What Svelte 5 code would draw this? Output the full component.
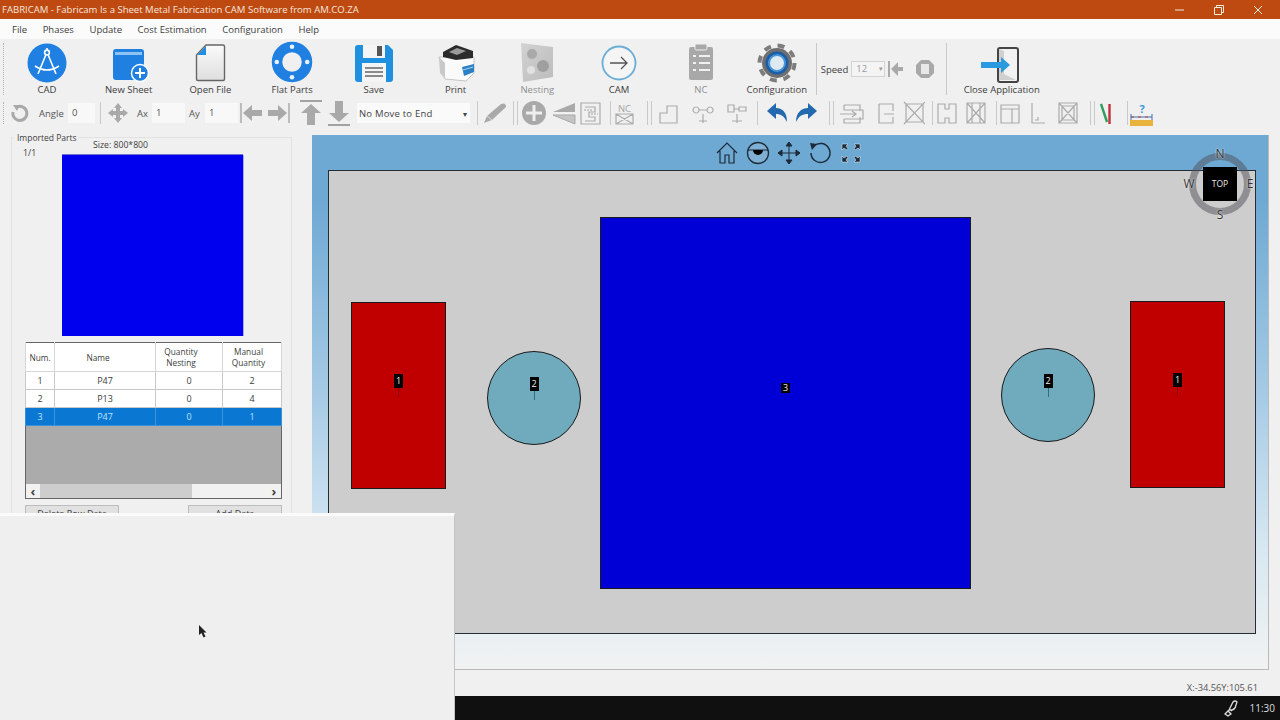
<script lang="ts">
  const g = "#a9a9a9";
  const line = (d: string) => `<path d="${d}" fill="none" stroke="#ababab" stroke-width="1.2"/>`;

  // second toolbar, right of the move-mode select: gap from the previous item, then either a separator or an icon
  const strip = [
    { gap: 7 },
    { gap: 5, w: 24, svg: `<path d="M1 22 L4 15 L18 3 Q23 1 23 6 L9 19 Z" fill="${g}"/><path d="M4 15 L9 19" stroke="#ddd"/>` },
    { gap: 6 },
    { gap: 3 },
    { gap: 4, w: 24, svg: `<circle cx="12" cy="12" r="12" fill="${g}"/><path d="M12 4V20M4 12H20" stroke="#eee" stroke-width="3"/>` },
    { gap: 6, w: 24, svg: `<path d="M1 11 L23 2 V11 Z" fill="${g}"/><path d="M1 14 H23 V23 Z" fill="#c4c4c4" stroke="${g}"/>` },
    { gap: 4, w: 21, svg: line("M1 2H20V23H1ZM5 6H15V11H9V16H15V20H5") + `<path d="M4 9H13M11 13H18" stroke="#a6a6a6" stroke-dasharray="2 1"/>` },
    { gap: 9 },
    { gap: 2, w: 23, svg: `<text x="11.5" y="11" text-anchor="middle" font-size="9.5" fill="#a6a6a6" font-family="Open Sans">NC</text>` + line("M3 13H20V23H3ZM3 13L20 23M20 13L3 23") },
    { gap: 11 },
    { gap: 3 },
    { gap: 7, w: 19, svg: line("M1 22V12H8V5H18V22Z") },
    { gap: 13, w: 23, svg: line("M5 6a3 3 0 1 0 .1 0M19 6a3 3 0 1 0 .1 0M8 9H16M12 13V22M8 20H16") },
    { gap: 12, w: 21, svg: line("M2 4H8V11H2ZM13 6H20V10H13ZM8 8H13M11 13V22M6 20H16") },
    { gap: 10 },
    { gap: 8, w: 21, svg: `<path d="M1 10 L10 2 V7 C17 7 21 12 21 21 C18 15 15 13 10 13 V18 Z" fill="#2269ae"/>` },
    { gap: 8, w: 22, svg: `<path d="M22 10 L13 2 V7 C6 7 1 12 1 21 C4 15 7 13 13 13 V18 Z" fill="#2269ae"/>` },
    { gap: 12 },
    { gap: 3 },
    { gap: 5, w: 26, svg: line("M5 4H21V10M5 4V9M5 18V22H21V16M1 13H17M13 10L17 13L13 16M5 9H24V18H5") },
    { gap: 13, w: 17, svg: line("M1 3H15V10M1 3V22H15V16M6 13H16") },
    { gap: 8, w: 22, svg: line("M3 3H20V21H3ZM1 1L22 23M22 1L1 23") },
    { gap: 7 },
    { gap: 4, w: 20, svg: line("M1 3H8V8H12V3H19V22H12V17H8V22H1Z") },
    { gap: 9, w: 20, svg: line("M1 2H19V22H1ZM1 2L19 22M19 2L1 22M6 2V22M14 2V22") },
    { gap: 10 },
    { gap: 3, w: 20, svg: line("M1 4H19V22H1ZM1 8H19M12 8V22") },
    { gap: 10, w: 16, svg: line("M2 2V22H15M5 19H8V16") },
    { gap: 12, w: 20, svg: line("M1 2H19V22H1ZM1 2L19 22M19 2L1 22M4 5H16V19H4Z") },
    { gap: 12 },
    { gap: 3 },
    { gap: 5, w: 11, svg: `<path d="M1 3L7 21" stroke="#2f9e5a" stroke-width="2.4"/><path d="M9.5 3V23" stroke="#c0303c" stroke-width="2.4"/>` },
    { gap: 16 },
    { gap: 2, w: 23, svg: `<text x="12" y="12" text-anchor="middle" font-size="11" font-weight="700" fill="#3a9ad9" font-family="Open Sans">?</text><path d="M1 13V19M22 13V19M1 16H22" stroke="#3b6fb0"/><path d="M1 16H22" stroke="#c04040" stroke-dasharray="3 4"/><rect x="0" y="19" width="23" height="6" fill="#e8b23c"/>` }
  ];

  const rows = [
    { num: 1, name: "P47", nesting: 0, manual: 2 },
    { num: 2, name: "P13", nesting: 0, manual: 4 },
    { num: 3, name: "P47", nesting: 0, manual: 1, selected: true }
  ];

  const shapes = [
    { kind: "red one", tag: 1 },
    { kind: "disc one", tag: 2 },
    { kind: "blue", tag: 3 },
    { kind: "disc two", tag: 2 },
    { kind: "red two", tag: 1 }
  ];
</script>

<div class="app">
  <header class="title">
    <span>FABRICAM - Fabricam Is a Sheet Metal Fabrication CAM Software from AM.CO.ZA</span>
    <div class="win">
      <svg width="12" height="12" viewBox="0 0 12 12"><path d="M1 6H10" stroke="#eed" /></svg>
      <svg width="12" height="12" viewBox="0 0 12 12"><path d="M1.5 3.5H8.5V10.5H1.5ZM3.5 3.5V1.5H10.5V8.5H8.5" fill="none" stroke="#eed" /></svg>
      <svg width="12" height="12" viewBox="0 0 12 12"><path d="M2 2L10 10M10 2L2 10" stroke="#eed" /></svg>
    </div>
  </header>

  <nav class="menu">
    <span>File</span><span>Phases</span><span>Update</span><span>Cost Estimation</span><span>Configuration</span><span>Help</span>
  </nav>

  <div class="bar big-bar">
    <button class="big">
      <svg width="40" height="40" viewBox="0 0 40 40">
        <circle cx="20" cy="20" r="19.5" fill="#1f80e2" />
        <g fill="none" stroke="#fff" stroke-width="1.6">
          <circle cx="20" cy="9.5" r="2.4" />
          <path d="M20 5V7M18.8 12L11 31M21.2 12L29 31M8 23Q20 31 32 23" />
        </g>
      </svg>
      <span>CAD</span>
    </button>
    <button class="big">
      <svg width="40" height="40" viewBox="0 0 40 40">
        <rect x="4" y="6" width="31" height="31" rx="3" fill="#1f80e2" />
        <rect x="6" y="9" width="27" height="3" fill="#8ec2f3" />
        <circle cx="31" cy="30" r="8.5" fill="#1f80e2" stroke="#fff" stroke-width="1.5" />
        <path d="M31 25V35M26 30H36" stroke="#fff" stroke-width="2" />
      </svg>
      <span>New Sheet</span>
    </button>
    <button class="big">
      <svg width="40" height="40" viewBox="0 0 40 40">
        <defs><linearGradient id="pg" x1="0" y1="0" x2="0" y2="1"><stop offset="0" stop-color="#fafafa" /><stop offset="1" stop-color="#dedede" /></linearGradient></defs>
        <path d="M16 2H33Q34.500 2 34.500 3.500V36Q34.500 37.500 33 37.500H8Q6.500 37.500 6.500 36V12Z" fill="url(#pg)" stroke="#666" stroke-width="1.400" />
        <path d="M16 3V12H7.500Z" fill="#1f8fe6" />
      </svg>
      <span>Open File</span>
    </button>
    <button class="big">
      <svg width="42" height="42" viewBox="0 0 42 42">
        <circle cx="21" cy="21" r="15" fill="none" stroke="#1f80e2" stroke-width="10.500" />
        <g fill="#e9f2fb">
          <circle cx="21" cy="5.800" r="2.300" /><circle cx="21" cy="36.200" r="2.300" />
          <circle cx="5.800" cy="21" r="2.300" /><circle cx="36.200" cy="21" r="2.300" />
        </g>
      </svg>
      <span>Flat Parts</span>
    </button>
    <button class="big">
      <svg width="40" height="40" viewBox="0 0 40 40">
        <path d="M1 5Q1 2 4 2H34L39 7V36Q39 39 36 39H4Q1 39 1 36Z" fill="#1f8fe0" />
        <rect x="9" y="2" width="22" height="13" fill="#f4f4f4" />
        <rect x="23" y="3" width="5" height="10" fill="#555" />
        <rect x="8" y="20" width="24" height="19" fill="#f4f4f4" />
        <path d="M11 25H29M11 29H29M11 33H29" stroke="#666" stroke-width="1.300" />
      </svg>
      <span>Save</span>
    </button>
    <button class="big">
      <svg width="40" height="40" viewBox="0 0 40 40">
        <path d="M3 14L9 36L30 38L38 30V14Z" fill="#fafafa" stroke="#c4c4c4" />
        <path d="M3 14L9 20V36L4 30Z" fill="#c9c9c9" />
        <path d="M7 9L20 2L37 8V15L20 17L7 14Z" fill="#2b2b2b" />
        <path d="M13 9L21 5L30 8L21 12Z" fill="#9a9a9a" />
        <path d="M26 24L38 21V29L28 33Z" fill="#2a80c6" />
        <path d="M27 27L37 24" stroke="#a6d2f0" />
      </svg>
      <span>Print</span>
    </button>
    <button class="big muted">
      <svg width="36" height="41" viewBox="0 0 36 41">
        <defs><linearGradient id="ng" x1="0" y1="0" x2="1" y2="1"><stop offset="0" stop-color="#d2d2d2" /><stop offset="1" stop-color="#bcbcbc" /></linearGradient></defs>
        <path d="M2 1L34 5V35L4 40Z" fill="url(#ng)" />
        <circle cx="13" cy="12" r="5" fill="#a9a9a9" />
        <circle cx="24" cy="24" r="6" fill="#9f9f9f" />
        <circle cx="12" cy="28" r="4" fill="#e1e1e1" />
      </svg>
      <span>Nesting</span>
    </button>
    <button class="big">
      <svg width="40" height="40" viewBox="0 0 40 40">
        <circle cx="20" cy="20" r="16.500" fill="#f5f5f5" stroke="#69aed6" stroke-width="1.800" />
        <path d="M11 20H28M22 14L28 20L22 26" fill="none" stroke="#555" stroke-width="1.300" />
      </svg>
      <span>CAM</span>
    </button>
    <button class="big muted">
      <svg width="30" height="40" viewBox="0 0 30 40">
        <rect x="3" y="4" width="24" height="33" rx="2" fill="#a8a8a8" />
        <rect x="9" y="1" width="12" height="6" rx="1.500" fill="#a8a8a8" stroke="#eee" />
        <path d="M7 13H10M13 13H24M7 20H10M13 20H24M7 27H10M13 27H24" stroke="#f0f0f0" stroke-width="2" />
      </svg>
      <span>NC</span>
    </button>
    <button class="big cfg">
      <svg width="40" height="40" viewBox="0 0 40 40">
        <circle cx="20" cy="20" r="17.500" fill="none" stroke="#7d7d7d" stroke-width="4" stroke-dasharray="7 6.750" />
        <circle cx="20" cy="20" r="15" fill="#6f6f6f" />
        <circle cx="20" cy="20" r="11.500" fill="#1c5fa8" />
        <circle cx="20" cy="20" r="8" fill="#dfe9f2" stroke="#4a95d8" stroke-width="2" />
      </svg>
      <span>Configuration</span>
    </button>
    <i class="sep tall"></i>
    <div class="speed">
      <span>Speed</span>
      <div class="spin">12<b>▾</b></div>
      <svg width="18" height="18" viewBox="0 0 18 18"><path d="M2 1H4V17H2ZM5 9L12 2V7H17V11H12V16Z" fill={g} /></svg>
      <svg class="stop" width="20" height="20" viewBox="0 0 20 20"><path d="M6 1H14L19 6V14L14 19H6L1 14V6Z" fill={g} /><rect x="6" y="5" width="8" height="10" fill="#e8e8e8" /></svg>
    </div>
    <i class="sep tall"></i>
    <button class="big close">
      <svg width="62" height="40" viewBox="0 0 62 40">
        <path d="M26 7H47V39H26Z" fill="#f2f2f2" />
        <path d="M27 7Q27 5 29 5H45Q47 5 47 7V37Q47 39 45 39H29Q27 39 27 37Z" fill="none" stroke="#444" stroke-width="2" />
        <path d="M28 6L33 8V31L45 37L28 37Z" fill="#d0d0d0" />
        <path d="M10 19H30V14L39 22L30 30V25H10Z" fill="#2a9ae0" />
      </svg>
      <span>Close Application</span>
    </button>
  </div>

  <div class="bar small-bar">
    <svg class="rotate" width="20" height="20" viewBox="0 0 20 20"><path d="M7 4A7 7 0 1 1 3 9" fill="none" stroke={g} stroke-width="3" /><path d="M3 2L10 2L7 8Z" fill={g} /></svg>
    <span class="lbl angle">Angle</span>
    <div class="field angle-field">0</div>
    <i class="sep short"></i>
    <svg class="move" width="20" height="20" viewBox="0 0 20 20"><path d="M10 0L14 5H12V8H15V6L20 10L15 14V12H12V15H14L10 20L6 15H8V12H5V14L0 10L5 6V8H8V5H6Z" fill={g} /></svg>
    <span class="lbl ax">Ax</span>
    <div class="field ax-field">1</div>
    <span class="lbl ay">Ay</span>
    <div class="field ax-field">1</div>
    <svg class="nav" width="24" height="24" viewBox="0 0 24 24"><path d="M1 2V22" stroke="#888" /><path d="M3 12L12 4V9H22V15H12V20Z" fill={g} /></svg>
    <svg class="nav2" width="24" height="24" viewBox="0 0 24 24"><path d="M21 12L12 4V9H2V15H12V20Z" fill={g} /><path d="M23 2V22" stroke="#888" /></svg>
    <svg class="nav3" width="24" height="26" viewBox="0 0 24 26"><path d="M1 1H23" stroke="#888" stroke-width="1.500" /><path d="M12 4L22 13H16V25H8V13H2Z" fill={g} /></svg>
    <svg class="nav4" width="24" height="26" viewBox="0 0 24 26"><path d="M1 25H23" stroke="#888" stroke-width="1.500" /><path d="M12 22L22 13H16V1H8V13H2Z" fill={g} /></svg>
    <div class="select"><span>No Move to End</span><b>▾</b></div>
    {#each strip as item}
      {#if item.svg}
        <svg class="strip-icon" style:margin-left="{item.gap}px" width={item.w} height="25" viewBox="0 0 {item.w} 25">{@html item.svg}</svg>
      {:else}
        <i class="sep strip-sep" style:margin-left="{item.gap}px"></i>
      {/if}
    {/each}
  </div>

  <main class="main">
    <aside class="side">
      <section class="group">
        <div class="legend">Imported Parts</div>
        <div class="head"><span class="page">1/1</span><span class="size">Size: 800*800</span></div>
        <div class="preview"></div>
        <table class="parts">
          <thead>
            <tr><th>Num.</th><th>Name</th><th>Quantity<br />Nesting</th><th>Manual<br />Quantity</th></tr>
          </thead>
          <tbody>
            {#each rows as row}
              <tr class:selected={row.selected}>
                <td>{row.num}</td><td>{row.name}</td><td>{row.nesting}</td><td>{row.manual}</td>
              </tr>
            {/each}
          </tbody>
        </table>
        <div class="scroll-wrap">
          <div class="empty"></div>
          <div class="hscroll"><span class="arrow">‹</span><div class="thumb"></div><span class="arrow end">›</span></div>
        </div>
        <div class="actions"><button>Delete Row Data</button><button>Add Data</button></div>
      </section>
    </aside>

    <div class="work">
      <div class="viewport">
        <div class="tools">
          <svg width="24" height="24" viewBox="0 0 24 24"><path d="M2 12L12 2L22 12M5 10V22H10V14H14V22H19V10" fill="none" stroke="#1d2b38" stroke-width="1.200" /></svg>
          <svg width="24" height="24" viewBox="0 0 24 24"><circle cx="12" cy="12" r="10.500" fill="#7fb0d4" stroke="#1d2b38" stroke-width="1.300" /><path d="M2 9H22" stroke="#1d2b38" /><path d="M7 9H17A5 5 0 0 1 7 9Z" fill="#000" /></svg>
          <svg width="24" height="24" viewBox="0 0 24 24"><path d="M12 1V23M1 12H23M12 1L9 5H15ZM12 23L9 19H15ZM1 12L5 9V15ZM23 12L19 9V15Z" fill="#1d2b38" stroke="#1d2b38" /></svg>
          <svg width="24" height="24" viewBox="0 0 24 24"><path d="M6 5A9.500 9.500 0 1 1 3 12" fill="none" stroke="#1d2b38" stroke-width="1.500" /><path d="M2 2L9 3L4 9Z" fill="#1d2b38" /></svg>
          <svg width="24" height="24" viewBox="0 0 24 24"><g fill="#1d2b38" stroke="#e6eef5" stroke-width="0.500"><path d="M3 3H9L7 5L9 8L8 9L5 7L3 9Z" /><path d="M21 3V9L19 7L16 9L15 8L17 5L15 3Z" /><path d="M3 21V15L5 17L8 15L9 16L7 19L9 21Z" /><path d="M21 21H15L17 19L15 16L16 15L19 17L21 15Z" /></g></svg>
        </div>
        <div class="compass">
          <div class="ring"></div>
          <div class="cube">TOP</div>
          <span class="dir n">N</span><span class="dir s">S</span><span class="dir w">W</span><span class="dir e">E</span>
        </div>
        <div class="canvas">
          {#each shapes as shape}
            <div class="shape {shape.kind}"><span class="tag">{shape.tag}</span></div>
          {/each}
        </div>
      </div>
      <div class="status">X:-34.56Y:105.61</div>
    </div>
  </main>

  <footer class="taskbar">
    <svg width="18" height="18" viewBox="0 0 18 18"><path d="M3 15L6 12L9 15L6 17ZM7 11L11 3Q13 1 15 3L13 9Q12 11 10 11ZM9 12L14 8" fill="none" stroke="#ddd" stroke-width="1.300" /></svg>
    <span>11:30</span>
  </footer>

  <div class="popup">
    <svg class="cursor" width="12" height="14" viewBox="0 0 12 14"><path d="M1 0V10L3.500 8L5.500 12.500L7.500 11.500L5.500 7.500H8.500Z" fill="#222" /></svg>
  </div>
</div>

<style>
  :global(body) {
    background: #f0f0f0;
  }

  .app {
    position: relative;
    width: 1280px;
    height: 720px;
    overflow: hidden;
    display: flex;
    flex-direction: column;
    background: #f0f0f0;
    color: #3d3d3d;
    font-family: "Open Sans", "Noto Sans", sans-serif;
    font-size: 9.5px;
  }

  .title {
    height: 19px;
    flex: none;
    background: #be4a12;
    color: #f6e6dc;
    display: flex;
    align-items: center;
    justify-content: space-between;
    padding-left: 2px;
    font-size: 9.55px;
  }

  .win {
    display: flex;
    gap: 27px;
    padding-right: 16px;
  }

  .menu {
    height: 20px;
    flex: none;
    background: #fbfbfb;
    display: flex;
    align-items: center;
    gap: 15.6px;
    padding-left: 12px;
  }

  .bar {
    display: flex;
    flex: none;
    background: #f0f0f0;
    padding-left: 3px;
  }

  .bar::before {
    content: "";
    flex: none;
    width: 0;
    height: 22px;
    margin-top: 4px;
    border-left: 1px dotted #b4b4b4;
  }

  .big-bar::before {
    height: 52px;
    margin-right: 2px;
  }

  .big-bar {
    height: 60px;
  }

  button {
    font: inherit;
    color: inherit;
    border: 0;
    background: none;
    padding: 0;
  }

  .big {
    width: 81.75px;
    height: 60px;
    display: flex;
    flex-direction: column;
    align-items: center;
    justify-content: flex-end;
    padding-bottom: 2px;
    line-height: 14px;
    white-space: nowrap;
  }

  .big svg {
    flex: none;
  }

  .muted {
    color: #8f8f8f;
  }

  .cfg {
    width: 70px;
  }

  .close {
    width: 90px;
    margin-left: 10px;
  }

  .sep {
    display: block;
    width: 1px;
    flex: none;
    background: #c9c9c9;
  }

  .tall {
    height: 52px;
    margin: 4px 0 0 4px;
  }

  .speed {
    display: flex;
    align-items: center;
    height: 60px;
    box-sizing: border-box;
    padding-left: 4px;
    width: 125px;
  }

  .spin {
    width: 34px;
    height: 16px;
    box-sizing: border-box;
    margin: 0 1px 0 3px;
    border: 1px solid #d4d4d4;
    background: #f4f4f4;
    color: #999;
    padding-left: 4px;
    line-height: 14px;
    display: flex;
    justify-content: space-between;
  }

  .spin b {
    font-size: 7px;
    padding-right: 1px;
    font-weight: 400;
  }

  .stop {
    margin-left: 11px;
  }

  .small-bar {
    height: 28px;
    margin-bottom: 2px;
    align-items: center;
  }

  .small-bar::before {
    margin: 0 6px 0 0;
  }

  .lbl {
    color: #555;
  }

  .angle {
    margin-left: 9px;
    width: 29px;
  }

  .field {
    height: 20px;
    background: #f8f8f8;
    line-height: 20px;
    padding-left: 4px;
    box-sizing: border-box;
    color: #555;
  }

  .angle-field {
    width: 27px;
  }

  .short {
    height: 22px;
    margin-left: 5px;
  }

  .move {
    margin-left: 7px;
  }

  .ax {
    margin-left: 9px;
    width: 15px;
  }

  .ax-field {
    width: 33px;
  }

  .ay {
    margin-left: 4px;
    width: 16px;
  }

  .nav {
    margin-left: 2px;
  }

  .nav2 {
    margin-left: 2px;
  }

  .nav3 {
    margin-left: 9px;
  }

  .nav4 {
    margin-left: 4px;
  }

  .select {
    margin-left: 6px;
    width: 113px;
    height: 20px;
    background: #fafafa;
    display: flex;
    justify-content: space-between;
    align-items: center;
    box-sizing: border-box;
    padding: 0 3px 0 2px;
    color: #444;
    letter-spacing: 0.2px;
  }

  .select b {
    font-size: 8px;
    font-weight: 400;
  }

  .strip-icon {
    flex: none;
  }

  .strip-sep {
    height: 24px;
  }

  .main {
    flex: 1;
    display: flex;
    min-height: 0;
  }

  .side {
    width: 312px;
    flex: none;
  }

  .group {
    margin: 8px 0 0 11px;
    width: 281px;
    height: 600px;
    box-sizing: border-box;
    border: 1px solid #e2e2e2;
    padding-left: 13px;
  }

  .legend {
    margin: -7px 0 0 -12px;
    width: fit-content;
    padding: 0 1px 0 4px;
    height: 14px;
    line-height: 14px;
    background: #f0f0f0;
    font-size: 8.5px;
  }

  .head {
    height: 10px;
    display: flex;
    font-size: 8.7px;
    line-height: 12px;
  }

  .page {
    margin: 2px 0 0 -2px;
    width: 70px;
  }

  .size {
    margin-top: -6px;
  }

  .preview {
    margin-left: 37px;
    width: 181px;
    height: 181px;
    background: #0000ee;
    box-shadow: 1px 0 0 #a8a8f4, 0 -1px 0 #7474d0;
  }

  .parts {
    margin-top: 6px;
    width: 257px;
    table-layout: fixed;
    border-collapse: collapse;
    border: 1.500px solid #666;
    border-bottom: 0;
    text-align: center;
    font-size: 9px;
    background: #fff;
  }

  .parts th {
    font-weight: 400;
    font-size: 8.3px;
    height: 28px;
    padding: 0;
    line-height: 11px;
    border: 1px solid #d6d6d6;
    border-top: 0;
  }

  .parts th:nth-child(1) {
    width: 28px;
  }

  .parts th:nth-child(2) {
    width: 86px;
    padding-right: 14px;
  }

  .parts th:nth-child(3) {
    width: 50px;
    padding-right: 16px;
  }

  .parts th:nth-child(4) {
    padding-right: 7px;
  }

  .parts td {
    height: 17px;
    padding: 0;
    border: 1px solid #c8c8c8;
    border-top: 0;
    line-height: 14px;
  }

  .selected td {
    background: #0a78d2;
    color: #bfe2ff;
    border-color: #3b92da;
  }

  .scroll-wrap {
    width: 257px;
    box-sizing: border-box;
    border: 1.500px solid #666;
    border-top: 0;
  }

  .empty {
    height: 58px;
    background: #ababab;
  }

  .hscroll {
    height: 14px;
    background: #f1f1f1;
    display: flex;
    align-items: center;
    color: #444;
    font-size: 13px;
    line-height: 12px;
  }

  .arrow {
    width: 14px;
    text-align: center;
    font-weight: 700;
  }

  .end {
    margin-left: auto;
  }

  .thumb {
    width: 152px;
    height: 14px;
    background: #cdcdcd;
  }

  .actions {
    margin-top: 6px;
    width: 257px;
    display: flex;
    justify-content: space-between;
  }

  .actions button {
    width: 94px;
    height: 22px;
    background: #e1e1e1;
    border: 1px solid #bdbdbd;
    font-size: 9px;
    padding-bottom: 5px;
  }

  .work {
    width: 957px;
    display: flex;
    flex-direction: column;
  }

  .viewport {
    position: relative;
    margin-top: 6px;
    height: 535px;
    flex: none;
    box-sizing: border-box;
    padding: 35px 12px 35px 16px;
    border-right: 1px solid #b9b9b9;
    border-bottom: 1px solid #b9b9b9;
    background: linear-gradient(#6ea9d3 0, #6ea9d3 12%, #a8cce6 50%, #d8e8f2 78%, #f1f2f2 100%);
  }

  .tools {
    position: absolute;
    top: 6px;
    left: 403px;
    display: flex;
    gap: 7px;
  }

  .compass {
    position: absolute;
    left: 877px;
    top: 18px;
    width: 62px;
    height: 62px;
    z-index: 2;
  }

  .ring {
    position: absolute;
    inset: 0;
    border-radius: 50%;
    box-sizing: border-box;
    border: 7px solid rgba(80, 80, 90, 0.5);
  }

  .cube {
    position: absolute;
    left: 14px;
    top: 14px;
    width: 34px;
    height: 34px;
    background: #000;
    color: #e8e8e8;
    text-align: center;
    line-height: 34px;
    font-size: 8.500px;
  }

  .dir {
    position: absolute;
    width: 14px;
    text-align: center;
    font-size: 12px;
    line-height: 14px;
    color: #333;
    text-shadow: 0 0 2px #fff;
  }

  .n {
    left: 24px;
    top: -6px;
  }

  .s {
    left: 24px;
    top: 55px;
  }

  .w {
    left: -7px;
    top: 24px;
  }

  .e {
    left: 54px;
    top: 24px;
  }

  .canvas {
    position: relative;
    height: 100%;
    box-sizing: border-box;
    background: #cdcdcd;
    border: 1.500px solid #222d35;
  }

  .shape {
    position: absolute;
    box-sizing: border-box;
    border: 1.500px solid #1a1a1a;
    display: flex;
    justify-content: center;
  }

  .red {
    width: 95px;
    height: 187px;
    background: #c00000;
  }

  .red.one {
    left: 22px;
    top: 131px;
  }

  .red.two {
    left: 801px;
    top: 130px;
  }

  .disc {
    width: 94px;
    height: 94px;
    border-radius: 50%;
    background: #70aabd;
  }

  .disc.one {
    left: 158px;
    top: 180px;
  }

  .disc.two {
    left: 672px;
    top: 177px;
  }

  .blue {
    left: 271px;
    top: 46px;
    width: 371px;
    height: 372px;
    background: #0000d6;
    align-items: center;
  }

  .tag {
    width: 9px;
    height: 14px;
    background: #000;
    color: #eee;
    font-size: 9px;
    line-height: 14px;
    text-align: center;
    margin-top: 71px;
  }

  .disc .tag {
    margin-top: 25px;
  }

  .blue .tag {
    margin-top: -30px;
    height: 10px;
    line-height: 10px;
  }

  .disc .tag::after,
  .red .tag::after {
    content: "";
    display: block;
    width: 1px;
    height: 9px;
    margin: 0 auto;
    background: #2f6f80;
  }

  .red .tag::after {
    background: #8e0000;
  }

  .status {
    flex: 1;
    display: flex;
    align-items: flex-end;
    justify-content: flex-end;
    padding: 0 11px 2px 0;
    font-size: 9.3px;
    color: #555;
  }

  .taskbar {
    height: 24px;
    flex: none;
    background: #101010;
    color: #dcdcdc;
    display: flex;
    align-items: center;
    justify-content: flex-end;
    gap: 10px;
    padding-right: 5px;
    font-size: 10px;
  }

  .popup {
    position: absolute;
    left: 0;
    top: 513px;
    width: 455px;
    height: 207px;
    box-sizing: border-box;
    background: #efefef;
    border-top: 3px solid #fbfbfb;
    border-right: 1px solid #c4c4c4;
  }

  .cursor {
    position: absolute;
    left: 198px;
    top: 109px;
  }
</style>
